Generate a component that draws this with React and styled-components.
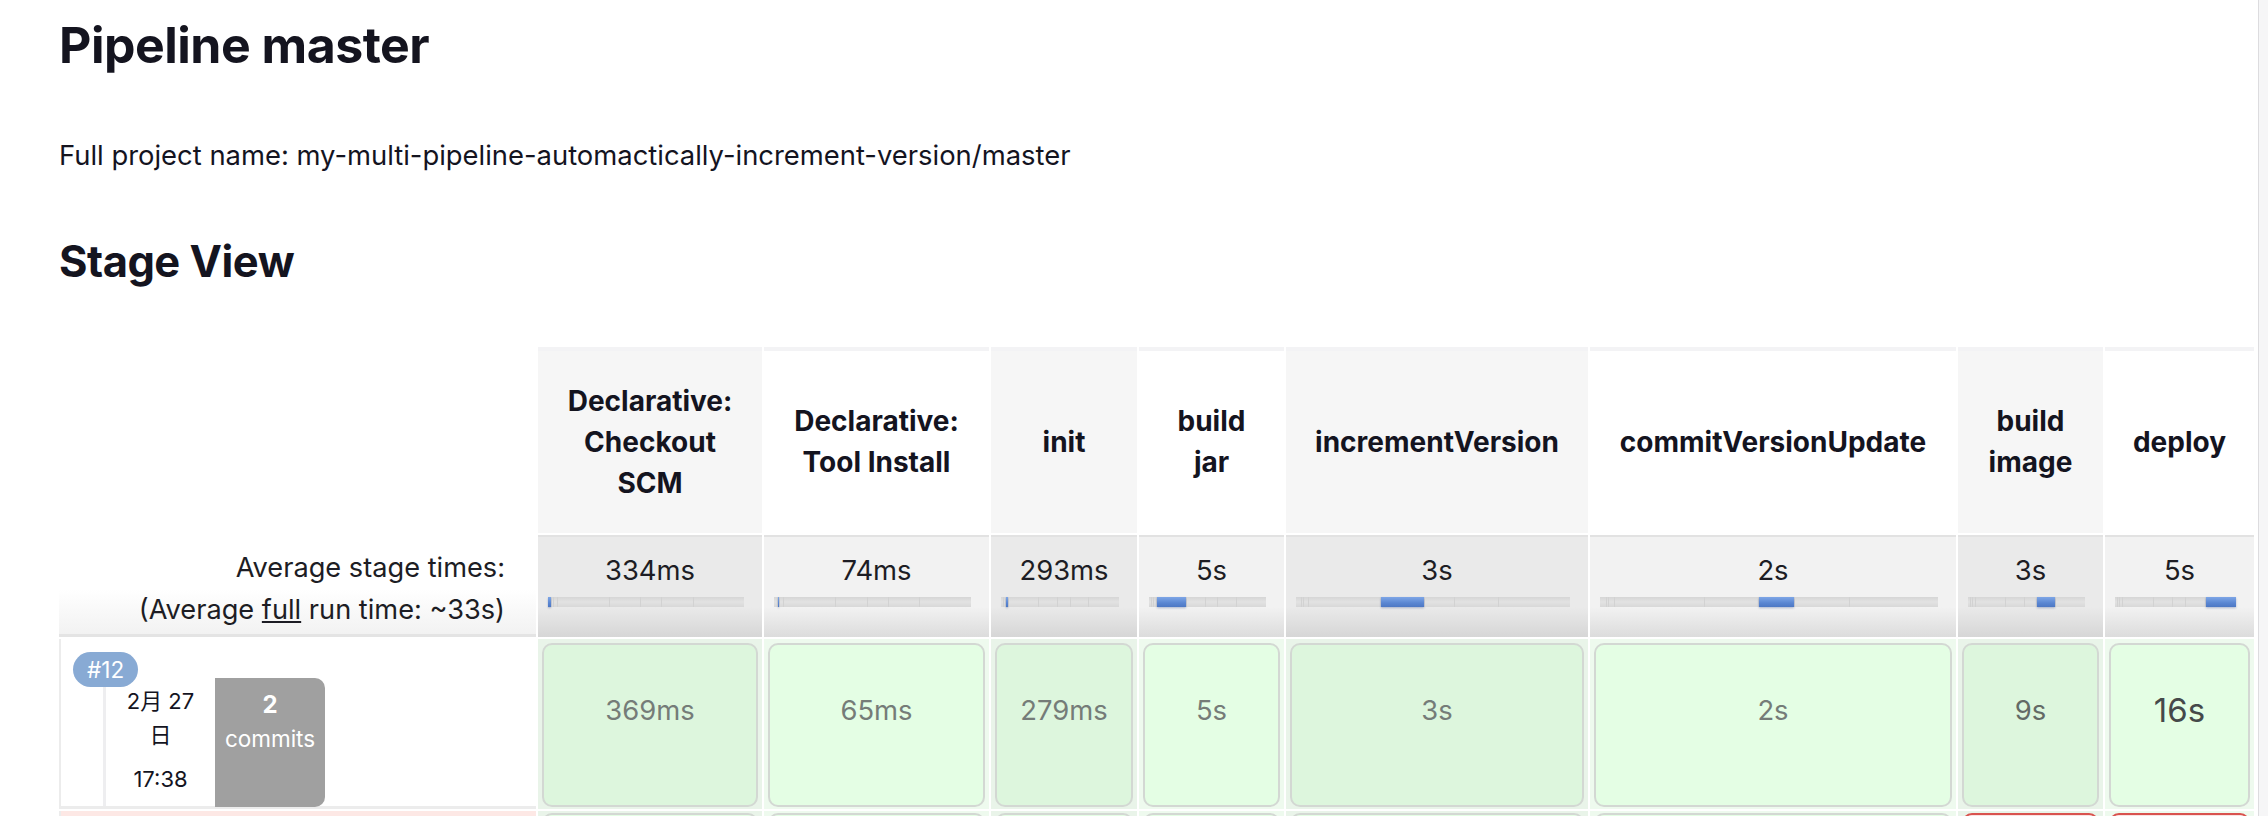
import React from "react";
import styled, { createGlobalStyle } from "styled-components";

const Global = createGlobalStyle`
  html, body { margin: 0; padding: 0; background: #fff; }
  body { font-family: Inter, "Noto Sans CJK JP", "Noto Sans", sans-serif; color: #14141f; overflow: hidden; }
  * { box-sizing: border-box; }
`;

const stages = [
  { name: "Declarative: Checkout SCM", avg: "334ms", ms: 334, run: "369ms" },
  { name: "Declarative: Tool Install", avg: "74ms", ms: 74, run: "65ms" },
  { name: "init", avg: "293ms", ms: 293, run: "279ms" },
  { name: "build jar", avg: "5s", ms: 5000, run: "5s" },
  { name: "incrementVersion", avg: "3s", ms: 3000, run: "3s" },
  { name: "commitVersionUpdate", avg: "2s", ms: 2000, run: "2s" },
  { name: "build image", avg: "3s", ms: 3000, run: "9s", tone: "mid", failNext: true },
  { name: "deploy", avg: "5s", ms: 5000, run: "16s", tone: "big", failNext: true },
];

const Page = styled.div`
  display: flex;
  height: 816px;
`;

const Main = styled.main`
  flex: 1;
  padding-left: 59px;
  overflow: hidden;
`;

const ScrollTrack = styled.div`
  width: 10px;
  background: #f6f6f7;
  border-left: 1px solid #dcdcdf;
`;

const Title = styled.h1`
  margin: 17px 0 0;
  font-size: 50px;
  line-height: 57px;
  font-weight: 700;
  letter-spacing: -0.5px;
`;

const ProjectName = styled.p`
  margin: 61px 0 0;
  font-size: 27.4px;
  line-height: 40px;
  color: #14141f;
`;

const SectionTitle = styled.h2`
  margin: 60px 0 0;
  font-size: 43.5px;
  line-height: 52px;
  font-weight: 700;
  letter-spacing: -0.5px;
`;

const StageGrid = styled.div`
  margin-top: 60px;
  display: grid;
  grid-template-columns: 477px 224px 225px 146px 145px 302px 366px 145px 149px;
  grid-template-rows: 182px 102px 170px 40px;
  column-gap: 2px;
  row-gap: 2px;
  padding-top: 4px;
  width: 2198px;
`;

const Blank = styled.div``;

const HeaderCell = styled.div`
  background: ${(p) => (p.$alt ? "#ffffff" : "#f6f6f6")};
  box-shadow: 0 -4px 0 #f3f3f5;
  display: flex;
  align-items: center;
  justify-content: center;
  text-align: center;
  padding: 0 20px;
  font-size: 28px;
  line-height: 41px;
  font-weight: 700;
  color: #14141f;
`;

const AvgLabel = styled.div`
  background: linear-gradient(to bottom, #ffffff 55%, #f2f2f2 100%);
  border-bottom: 3px solid #e4e4e4;
  text-align: right;
  padding: 12px 31px 0 0;
  font-size: 27.2px;
  line-height: 42px;
  color: #1d1d24;
`;

const Underlined = styled.span`
  text-decoration: underline;
`;

const AvgCell = styled.div`
  background: ${(p) =>
    p.$alt
      ? "linear-gradient(to bottom, #f2f2f2 0%, #f2f2f2 70%, #dcdcdc 100%)"
      : "linear-gradient(to bottom, #eaeaea 0%, #eaeaea 70%, #d6d6d6 100%)"};
  border-top: 2px solid #e2e2e2;
  padding-top: 13px;
  text-align: center;
  font-size: 27.4px;
  line-height: 40px;
  color: #1d1d24;
`;

const Track = styled.div`
  display: flex;
  height: 10px;
  margin: 7px 18px 0 10px;
  background: #d2d2d2;
  gap: 1px;
`;

const Segment = styled.div`
  min-width: 1px;
  background: ${(p) =>
    p.$active
      ? "linear-gradient(to bottom, #7ea6e6 0%, #5a86d2 60%, #4d78c4 100%)"
      : "linear-gradient(to bottom, #d6d6d6 0%, #e2e2e2 50%, #d8d8d8 100%)"};
  box-shadow: ${(p) => (p.$active ? "0 1px 2px rgba(40,70,140,0.35)" : "none")};
`;

const BuildCell = styled.div`
  position: relative;
  background: #fff;
  border-left: 2px solid #ececec;
  border-bottom: 3px solid #ececec;
  padding: 39px 0 0 42px;
  display: flex;
  align-items: stretch;
`;

const Badge = styled.span`
  position: absolute;
  left: 12px;
  top: 13px;
  height: 35px;
  padding: 0 14px;
  border-radius: 18px;
  background: #88aad4;
  color: #fff;
  font-size: 22.5px;
  line-height: 35px;
  z-index: 1;
`;

const DateBox = styled.div`
  width: 112px;
  background: #fff;
  border-left: 3px solid #eeeef0;
  padding-top: 6px;
  text-align: center;
  font-size: 22px;
  line-height: 34px;
  color: #14141f;
`;

const Time = styled.div`
  margin-top: 10px;
`;

const CommitBox = styled.div`
  width: 110px;
  margin-bottom: -1px;
  background: #a0a0a0;
  border-radius: 0 10px 10px 0;
  padding-top: 10px;
  text-align: center;
  color: #fff;
  font-size: 22.5px;
  line-height: 34px;
`;

const CommitCount = styled.div`
  font-weight: 700;
  font-size: 24px;
`;

const StageColumn = styled.div`
  background: ${(p) => (p.$alt ? "#eefaee" : "#e9f4e9")};
  padding: 4px 4px 2px;
  display: flex;
`;

const RunBox = styled.div`
  flex: 1;
  border: 2px solid #d3d8d3;
  border-radius: 10px;
  background: ${(p) => (p.$alt ? "#e4fee4" : "#ddf6dd")};
  padding-top: 45px;
  text-align: center;
  font-size: ${(p) => (p.$tone === "big" ? "33px" : "27.4px")};
  line-height: 40px;
  color: ${(p) => (p.$tone === "big" ? "#45494a" : p.$tone === "mid" ? "#636a66" : "#757c78")};
`;

const FailedLeft = styled.div`
  background: #fde8e5;
  border-left: 2px solid #ececec;
`;

const NextColumn = styled.div`
  background: ${(p) => (p.$alt ? "#eefaee" : "#e9f4e9")};
  padding: 2px 4px 0;
  display: flex;
`;

const NextBox = styled.div`
  flex: 1;
  border: 2px solid ${(p) => (p.$fail ? "#d9534f" : "#d3d8d3")};
  border-radius: 10px;
  background: ${(p) => (p.$fail ? "#fbe3e2" : "#e4fee4")};
`;

const total = stages.reduce((s, x) => s + x.ms, 0);

function Bar({ active }) {
  return (
    <Track>
      {stages.map((s, i) => (
        <Segment key={i} $active={i === active} style={{ flexGrow: s.ms / total, flexBasis: 0 }} />
      ))}
    </Track>
  );
}

export default function App() {
  return (
    <Page>
      <Global />
      <Main>
        <Title>Pipeline master</Title>
        <ProjectName>Full project name: my-multi-pipeline-automactically-increment-version/master</ProjectName>
        <SectionTitle>Stage View</SectionTitle>
        <StageGrid>
          <Blank />
          {stages.map((s, i) => (
            <HeaderCell key={s.name} $alt={i % 2 === 1}>{s.name}</HeaderCell>
          ))}

          <AvgLabel>
            Average stage times:
            <br />
            (Average <Underlined>full</Underlined> run time: ~33s)
          </AvgLabel>
          {stages.map((s, i) => (
            <AvgCell key={s.name} $alt={i % 2 === 1}>
              {s.avg}
              <Bar active={i} />
            </AvgCell>
          ))}

          <BuildCell>
            <Badge>#12</Badge>
            <DateBox>
              2月 27
              <br />
              日
              <Time>17:38</Time>
            </DateBox>
            <CommitBox>
              <CommitCount>2</CommitCount>
              commits
            </CommitBox>
          </BuildCell>
          {stages.map((s, i) => (
            <StageColumn key={s.name} $alt={i % 2 === 1}>
              <RunBox $alt={i % 2 === 1} $tone={s.tone}>{s.run}</RunBox>
            </StageColumn>
          ))}

          <FailedLeft />
          {stages.map((s, i) => (
            <NextColumn key={s.name} $alt={i % 2 === 1}>
              <NextBox $fail={s.failNext} />
            </NextColumn>
          ))}
        </StageGrid>
      </Main>
      <ScrollTrack />
    </Page>
  );
}
